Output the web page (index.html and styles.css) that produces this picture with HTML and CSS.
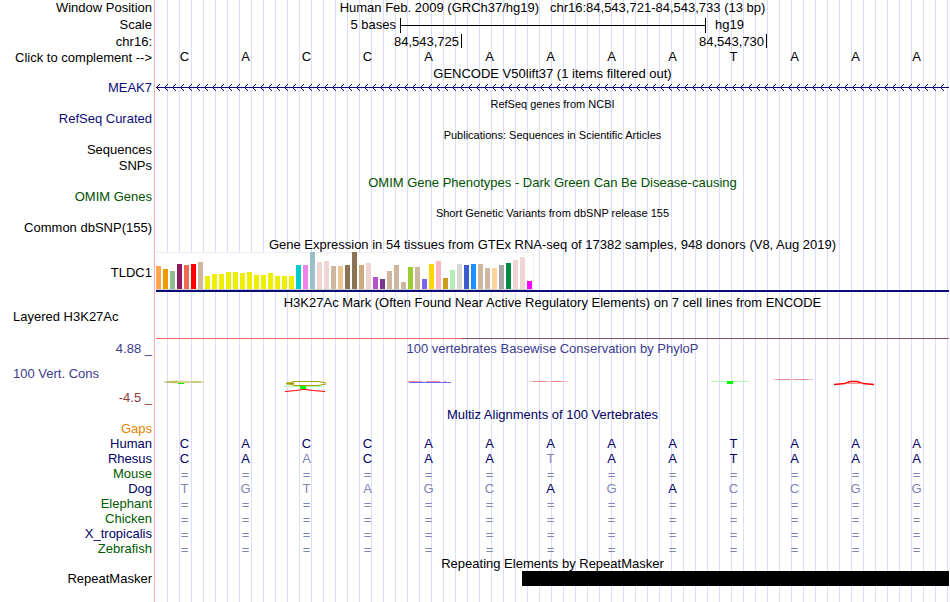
FILE: index.html
```
<!DOCTYPE html>
<html lang="en">
<head>
<meta charset="utf-8">
<title>chr16:84,543,721-84,543,733 - Genome Browser</title>
<link rel="stylesheet" href="styles.css">
</head>
<body>
<main class="browser">
  <div class="row h16"><div class="label">Window Position</div><h1 class="title">Human Feb. 2009 (GRCh37/hg19) &nbsp; chr16:84,543,721-84,543,733 (13 bp)</h1></div>
  <div class="row h18"><div class="label">Scale</div>
    <div class="scale"><span class="scale-name">5 bases</span><span class="scale-bar"></span><span class="scale-db">hg19</span></div></div>
  <div class="row h16"><div class="label">chr16:</div>
    <div class="ruler"><span>84,543,725</span><span>84,543,730</span><span></span></div></div>
  <div class="row h15"><button class="label" type="button">Click to complement --&gt;</button>
    <div class="bases"><span>C</span><span>A</span><span>C</span><span>C</span><span>A</span><span>A</span><span>A</span><span>A</span><span>A</span><span>T</span><span>A</span><span>A</span><span>A</span></div></div>

  <div class="row h16"><div class="label"></div><h2 class="title track">GENCODE V50lift37 (1 items filtered out)</h2></div>
  <div class="row h14"><div class="label blue">MEAK7</div>
    <svg class="gene" width="100%" height="14" aria-hidden="true">
      <defs><pattern id="arrow" width="8" height="14" patternUnits="userSpaceOnUse"><path d="M4 3L.5 6.500L4 10" fill="none" stroke="#0c0c78"/></pattern></defs>
      <rect width="100%" height="14" fill="url(#arrow)"/><rect y="6" width="100%" height="1" fill="#0c0c78"/>
    </svg></div>

  <div class="row h17"><div class="label"></div><h2 class="title small">RefSeq genes from NCBI</h2></div>
  <div class="row h14"><div class="label blue">RefSeq Curated</div></div>
  <div class="row h17"><div class="label"></div><h2 class="title small">Publications: Sequences in Scientific Articles</h2></div>
  <div class="row h14"><div class="label">Sequences</div></div>
  <div class="row h17"><div class="label">SNPs</div></div>
  <div class="row h16"><div class="label"></div><h2 class="title track green">OMIM Gene Phenotypes - Dark Green Can Be Disease-causing</h2></div>
  <div class="row h14"><div class="label green">OMIM Genes</div></div>
  <div class="row h17"><div class="label"></div><h2 class="title small">Short Genetic Variants from dbSNP release 155</h2></div>
  <div class="row h14"><div class="label">Common dbSNP(155)</div></div>

  <div class="row h17"><div class="label"></div><h2 class="title track">Gene Expression in 54 tissues from GTEx RNA-seq of 17382 samples, 948 donors (V8, Aug 2019)</h2></div>
  <div class="row h42"><div class="label">TLDC1</div>
    <div class="gtex"><div class="bars">
      <i style="height:23px;background:#ffa54f"></i><i style="height:20px;background:#ee9a00"></i><i style="height:18px;background:#8fbc8f"></i><i style="height:25px;background:#8b1c62"></i><i style="height:24px;background:#ee6a50"></i><i style="height:25px;background:#ff0000"></i><i style="height:27px;background:#cdb79e"></i>
      <i style="height:13px;background:#eeee00"></i><i style="height:15px;background:#eeee00"></i><i style="height:15px;background:#eeee00"></i><i style="height:17px;background:#eeee00"></i><i style="height:17px;background:#eeee00"></i><i style="height:16px;background:#eeee00"></i><i style="height:17px;background:#eeee00"></i><i style="height:14px;background:#eeee00"></i><i style="height:14px;background:#eeee00"></i><i style="height:16px;background:#eeee00"></i><i style="height:13px;background:#eeee00"></i><i style="height:13px;background:#eeee00"></i><i style="height:13px;background:#eeee00"></i>
      <i style="height:24px;background:#00cdcd"></i><i style="height:24px;background:#ee82ee"></i><i style="height:37px;background:#9ac0cd"></i><i style="height:27px;background:#eed5d2"></i><i style="height:28px;background:#eed5d2"></i><i style="height:23px;background:#cdb79e"></i><i style="height:23px;background:#eec591"></i><i style="height:24px;background:#8b7355"></i><i style="height:37px;background:#8b7355"></i><i style="height:24px;background:#cdaa7d"></i><i style="height:26px;background:#eed5d2"></i>
      <i style="height:12px;background:#b452cd"></i><i style="height:10px;background:#7a378b"></i><i style="height:18px;background:#cdb79e"></i><i style="height:24px;background:#cdb79e"></i><i style="height:7px;background:#cdb79e"></i><i style="height:22px;background:#9acd32"></i><i style="height:22px;background:#cdb79e"></i><i style="height:10px;background:#7a67ee"></i><i style="height:25px;background:#ffd700"></i><i style="height:28px;background:#ffb6c1"></i><i style="height:11px;background:#cd9b1d"></i><i style="height:19px;background:#b4eeb4"></i><i style="height:25px;background:#d9d9d9"></i><i style="height:24px;background:#3a5fcd"></i><i style="height:25px;background:#1e90ff"></i>
      <i style="height:25px;background:#cdb79e"></i><i style="height:21px;background:#cdb79e"></i><i style="height:21px;background:#ffd39b"></i><i style="height:24px;background:#a6a6a6"></i><i style="height:26px;background:#008b45"></i><i style="height:29px;background:#eed5d2"></i><i style="height:32px;background:#eed5d2"></i><i style="height:8px;background:#ff00ff"></i>
    </div></div></div>

  <div class="row h16"><div class="label"></div><h2 class="title track">H3K27Ac Mark (Often Found Near Active Regulatory Elements) on 7 cell lines from ENCODE</h2></div>
  <div class="row h32"><div class="label top start">Layered H3K27Ac</div><div class="signal"><span></span><span></span></div></div>

  <div class="row">
    <div class="axis"><span>4.88 _</span><span class="start">100 Vert. Cons</span><span class="min">-4.5 _</span></div>
    <div>
      <h2 class="title violet">100 vertebrates Basewise Conservation by PhyloP</h2>
      <svg class="phylop" viewBox="0 0 793 51" preserveAspectRatio="none" width="100%" height="51" aria-hidden="true">
        <path d="M8 26L20 25L36 25.500L48 26L36 26.500L20 27Z" fill="#d8d488" stroke="#c8c470" stroke-width=".6"/>
        <path d="M10 26H21" stroke="#b0aa40"/><path d="M37 26H45" stroke="#c0bc60"/>
        <rect x="22" y="27" width="6" height="1" fill="#00f000"/>
        <path d="M137 25.500H163M138 29.500H163" stroke="#a0a000"/>
        <path d="M138 25.500L132 27.500L139 29.500M162 25.500L170 27M170 28L162 29.500" fill="none" stroke="#a0a000"/>
        <path d="M130 27.500H138" stroke="#a0a000" stroke-width="2"/>
        <path d="M128 30.500H166" stroke="#b0ffb0"/>
        <rect x="144" y="30" width="6" height="3" fill="#00ff00"/>
        <path d="M129 35.500L140 34.500L147 33.500H150L157 34.500L169 35.500" fill="none" stroke="#ff0000" stroke-width="1.200"/>
        <path d="M252 25.500H290" stroke="#ff8888" stroke-dasharray="14 4"/>
        <path d="M253 26.500H295" stroke="#6868ff"/>
        <path d="M373 25.500H412" stroke="#ffc8c8"/><path d="M377 25.500H391M395 25.500H407" stroke="#e89090"/>
        <path d="M555 25.500H593" stroke="#b0ffb0"/>
        <rect x="571" y="25" width="6" height="3" fill="#00ff00"/>
        <path d="M617 23.500H657" stroke="#f0c0c0"/><path d="M621 23.500H634M638 23.500H652" stroke="#e09090"/>
        <path d="M678 28.500L689 27.500L694 25.500H701L707 27.500L718 28.500" fill="none" stroke="#ff0000" stroke-width="1.500"/>
        <path d="M690 27.500H706" stroke="#ff9090"/>
      </svg>
    </div>
  </div>

  <div class="row h14"><div class="label"></div><h2 class="title track navy">Multiz Alignments of 100 Vertebrates</h2></div>
  <table class="align">
    <colgroup><col class="name-col"><col span="13"></colgroup>
    <tr><th class="gaps">Gaps</th><td colspan="13"></td></tr>
    <tr><th>Human</th><td>C</td><td>A</td><td>C</td><td>C</td><td>A</td><td>A</td><td>A</td><td>A</td><td>A</td><td>T</td><td>A</td><td>A</td><td>A</td></tr>
    <tr><th>Rhesus</th><td>C</td><td>A</td><td class="dim">A</td><td>C</td><td>A</td><td>A</td><td class="dim">T</td><td>A</td><td>A</td><td>T</td><td>A</td><td>A</td><td>A</td></tr>
    <tr class="none"><th>Mouse</th><td>=</td><td>=</td><td>=</td><td>=</td><td>=</td><td>=</td><td>=</td><td>=</td><td>=</td><td>=</td><td>=</td><td>=</td><td>=</td></tr>
    <tr><th>Dog</th><td class="dim">T</td><td class="dim">G</td><td class="dim">T</td><td class="dim">A</td><td class="dim">G</td><td class="dim">C</td><td>A</td><td class="dim">G</td><td>A</td><td class="dim">C</td><td class="dim">C</td><td class="dim">G</td><td class="dim">G</td></tr>
    <tr class="none"><th>Elephant</th><td>=</td><td>=</td><td>=</td><td>=</td><td>=</td><td>=</td><td>=</td><td>=</td><td>=</td><td>=</td><td>=</td><td>=</td><td>=</td></tr>
    <tr class="none"><th>Chicken</th><td>=</td><td>=</td><td>=</td><td>=</td><td>=</td><td>=</td><td>=</td><td>=</td><td>=</td><td>=</td><td>=</td><td>=</td><td>=</td></tr>
    <tr class="none"><th class="navy">X_tropicalis</th><td>=</td><td>=</td><td>=</td><td>=</td><td>=</td><td>=</td><td>=</td><td>=</td><td>=</td><td>=</td><td>=</td><td>=</td><td>=</td></tr>
    <tr class="none"><th>Zebrafish</th><td>=</td><td>=</td><td>=</td><td>=</td><td>=</td><td>=</td><td>=</td><td>=</td><td>=</td><td>=</td><td>=</td><td>=</td><td>=</td></tr>
  </table>

  <div class="row h15"><div class="label"></div><h2 class="title track">Repeating Elements by RepeatMasker</h2></div>
  <div class="row h15"><div class="label">RepeatMasker</div><div class="repeat"><span></span></div></div>
</main>
</body>
</html>
```
FILE: styles.css
```
* { box-sizing: border-box; }

body {
  margin: 0;
  background: #fff;
  color: #000;
  font: 13px/14px "Liberation Sans", Arial, sans-serif;
}

/* Guide lines run behind every track, right of the label column. */
.browser {
  min-height: 100vh;
  padding: 0 1px 16px 0;
  background:
    linear-gradient(#ffb4b4, #ffb4b4) 154px 0 / 1px 100% no-repeat,
    repeating-linear-gradient(90deg, transparent 0 11px, #dcdcff 11px 12px) 156px 0 no-repeat;
}

.row {
  display: grid;
  grid-template-columns: 156px minmax(0, 1fr);
  align-items: center;
}
.h14 { height: 14px; }
.h15 { height: 15px; }
.h16 { height: 16px; }
.h17 { height: 17px; }
.h18 { height: 18px; }
.h32 { height: 32px; }
.h42 { height: 42px; }

.label {
  padding: 0 4px 0 13px;
  border: 0;
  background: none;
  color: #000;
  font: inherit;
  text-align: right;
  white-space: nowrap;
}
.top { align-self: start; }
.start { text-align: left; }

.title {
  margin: 0;
  font-size: 13px;
  font-weight: normal;
  text-align: center;
  white-space: nowrap;
}
.small { font-size: 11px; }
.track { align-self: end; padding-top: 1px; }

.label.blue { color: #0c0c78; }
.label.green, .title.green { color: #005000; }
.title.violet { color: #3c3c8c; }
.title.navy { color: #000064; }

.scale {
  display: grid;
  grid-template-columns: 4fr 5fr 4fr;
  height: 15px;
}
.scale-name { padding-right: 4px; text-align: right; }
.scale-bar {
  border-left: 1px solid #000;
  background: linear-gradient(#000, #000) 0 7px / 100% 1px no-repeat;
}
.scale-db { padding-left: 9px; border-left: 1px solid #000; }

.ruler {
  display: grid;
  grid-template-columns: 5fr 5fr 3fr;
  align-self: start;
}
.ruler span { height: 14px; padding-right: 2px; text-align: right; line-height: 16px; }
.ruler span + span { border-left: 1px solid #000; }

.bases {
  display: grid;
  grid-template-columns: repeat(13, 1fr);
  align-self: start;
  line-height: 13px;
  text-align: center;
}
.bases span { padding-right: 4px; }

.gene, .phylop { display: block; }

.gtex {
  align-self: start;
  height: 40px;
  border-bottom: 2px solid #0c0c78;
}
.bars {
  display: flex;
  align-items: flex-end;
  gap: 2px;
  width: 378px;
  height: 38px;
  border: solid #f0f0f4;
  border-width: 1px 1px 0 0;
  border-bottom: 1px solid #d0d0d0;
  background: #fff;
}
.bars i { flex: 0 0 5px; margin-top: -1px; }

.signal {
  display: grid;
  grid-template-columns: 5fr 8fr;
  align-self: end;
  padding-bottom: 3px;
}
.signal span { height: 1px; background: #ff6464; }
.signal span + span { background: #8c5064; }

.axis {
  display: flex;
  flex-direction: column;
  justify-content: space-between;
  align-self: stretch;
  padding: 0 4px 2px 13px;
  color: #3c3c8c;
  text-align: right;
}
.axis .start { text-align: left; }
.axis .min { color: #8c3c3c; }

.align {
  width: 100%;
  table-layout: fixed;
  border-collapse: collapse;
  color: #000064;
}
.name-col { width: 156px; }
.align th, .align td {
  height: 15px;
  padding: 0 4px 0 0;
  font-weight: normal;
  text-align: center;
}
.align th { text-align: right; }
.align .gaps { color: #e68200; }
.align .dim, .align .none td { color: #8284b4; }
.align .none td { padding-top: 2px; line-height: 13px; }
.none th { color: #005a00; }
.none th.navy { color: #000064; }

.repeat {
  display: grid;
  grid-template-columns: 6fr 7fr;
}
.repeat span { grid-column: 2; height: 15px; background: #000; }
```
